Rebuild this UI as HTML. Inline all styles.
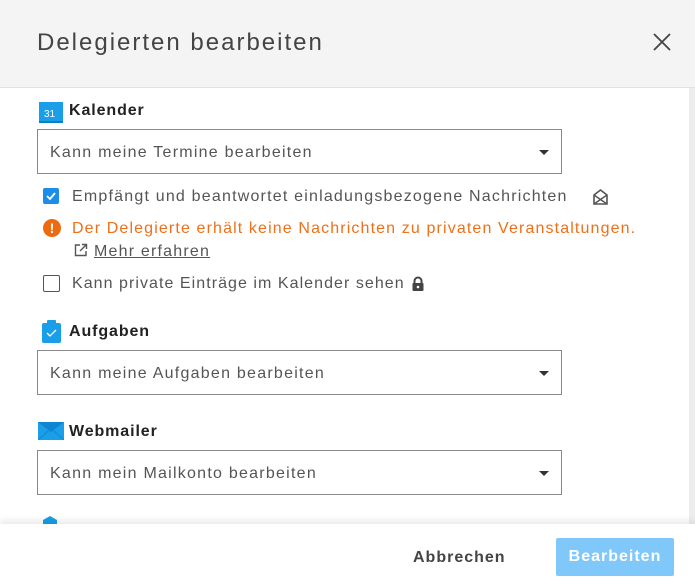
<!DOCTYPE html>
<html><head><meta charset="utf-8"><style>
*{box-sizing:border-box;margin:0;padding:0}
body{width:695px;height:584px;overflow:hidden;background:#fff;font-family:"Liberation Sans",sans-serif;color:#555;position:relative}
.hdr{position:absolute;left:0;top:0;width:695px;height:88px;background:#f4f4f4;border-bottom:1px solid #e2e2e2}
.hdr h1{position:absolute;left:37px;top:29px;font-weight:normal;font-size:24px;color:#444;letter-spacing:2px}
.sb{position:absolute;left:689px;top:88px;width:6px;height:436px;background:#ededed}
.lbl{position:absolute;left:69px;font-size:16px;font-weight:bold;color:#222;letter-spacing:0.9px}
.sel{position:absolute;left:37px;width:525px;height:45px;border:1px solid #888;font-size:16px;color:#555;padding:14px 0 0 12px;letter-spacing:1.25px}
.sel:after{content:"";position:absolute;right:12px;top:20px;border-left:5px solid transparent;border-right:5px solid transparent;border-top:5px solid #333}
.t{position:absolute;font-size:16px;white-space:nowrap;letter-spacing:1.2px}
.ft{position:absolute;left:0;top:524px;width:695px;height:60px;background:#fff;box-shadow:0 -4px 6px rgba(0,0,0,.08)}
</style></head><body>
<div class="hdr"><h1>Delegierten bearbeiten</h1>
<svg style="position:absolute;left:653px;top:33px" width="18" height="18"><path d="M1 1L17 17M17 1L1 17" stroke="#444" stroke-width="1.8"/></svg></div>
<div class="sb"></div>

<svg style="position:absolute;left:39px;top:100px" width="24" height="23"><rect x="0" y="2" width="24" height="20" fill="#1a9ee8"/><rect x="0" y="21" width="24" height="2" fill="#0d7fc4"/><text x="5" y="17" font-size="10" fill="#fff" font-family="Liberation Sans">31</text></svg>
<div class="lbl" style="top:102px">Kalender</div>
<div class="sel" style="top:129px">Kann meine Termine bearbeiten</div>

<div style="position:absolute;left:43px;top:188px;width:16px;height:16px;background:#1a8ee8;border-radius:2px"><svg width="16" height="16"><path d="M4 8l3 3 5-6" stroke="#fff" stroke-width="1.8" fill="none"/></svg></div>
<div class="t" style="left:72px;top:188px">Empfängt und beantwortet einladungsbezogene Nachrichten</div>
<svg style="position:absolute;left:592px;top:188px" width="17" height="18"><path d="M2 7L8.5 2 15 7V16H2Z" fill="none" stroke="#555" stroke-width="1.6"/><path d="M2 7L15 16M15 7L2 16" stroke="#555" stroke-width="1.4"/></svg>

<div style="position:absolute;left:43px;top:219px;width:18px;height:18px;border-radius:50%;background:#ee6a10;color:#fff;font-weight:bold;font-size:14px;text-align:center;line-height:18px">!</div>
<div class="t" style="left:72px;top:220px;color:#ef7018;letter-spacing:1.13px">Der Delegierte erhält keine Nachrichten zu privaten Veranstaltungen.</div>
<svg style="position:absolute;left:74px;top:243px" width="14" height="14"><path d="M6 2H1.5V12.5H12V8M8 1.5H12.5V6M12.5 1.5L6 8" stroke="#555" stroke-width="1.4" fill="none"/></svg>
<div class="t" style="left:94px;top:243px;text-decoration:underline">Mehr erfahren</div>

<div style="position:absolute;left:43px;top:275px;width:17px;height:17px;border:1.5px solid #555;border-radius:2px"></div>
<div class="t" style="left:72px;top:275px;letter-spacing:1.05px">Kann private Einträge im Kalender sehen</div>
<svg style="position:absolute;left:411px;top:276px" width="14" height="16"><path d="M3.5 7V5a3.5 3.5 0 017 0v2" stroke="#444" stroke-width="2" fill="none"/><rect x="1.5" y="7" width="11" height="8" rx="1" fill="#444"/><circle cx="7" cy="11" r="1.3" fill="#fff"/></svg>

<svg style="position:absolute;left:42px;top:320px" width="19" height="23"><rect x="0" y="3" width="19" height="20" rx="2" fill="#1a9ee8"/><rect x="5" y="0" width="9" height="5" rx="1" fill="#1a9ee8"/><path d="M5 13l3 3 6-6" stroke="#fff" stroke-width="1.3" fill="none"/></svg>
<div class="lbl" style="top:323px">Aufgaben</div>
<div class="sel" style="top:350px">Kann meine Aufgaben bearbeiten</div>

<svg style="position:absolute;left:38px;top:422px" width="26" height="18"><rect width="26" height="18" fill="#1a9ee8"/><path d="M0 0L13 10 26 0" fill="#0d85d0"/><path d="M0 18L11 8M26 18L15 8" stroke="#1487d0" stroke-width="1"/></svg>
<div class="lbl" style="top:423px">Webmailer</div>
<div class="sel" style="top:450px">Kann mein Mailkonto bearbeiten</div>

<svg style="position:absolute;left:43px;top:516px" width="14" height="10"><path d="M0 4L7 0 14 4V10H0Z" fill="#1a9ee8"/></svg>

<div class="ft">
<div class="t" style="left:413px;top:25px;font-weight:bold;color:#444;letter-spacing:1px">Abbrechen</div>
<div style="position:absolute;left:556px;top:14px;width:118px;height:38px;background:#80c8fa;border-radius:2px;color:#fff;font-weight:bold;font-size:16px;text-align:center;line-height:38px;letter-spacing:1px">Bearbeiten</div>
</div>
</body></html>
